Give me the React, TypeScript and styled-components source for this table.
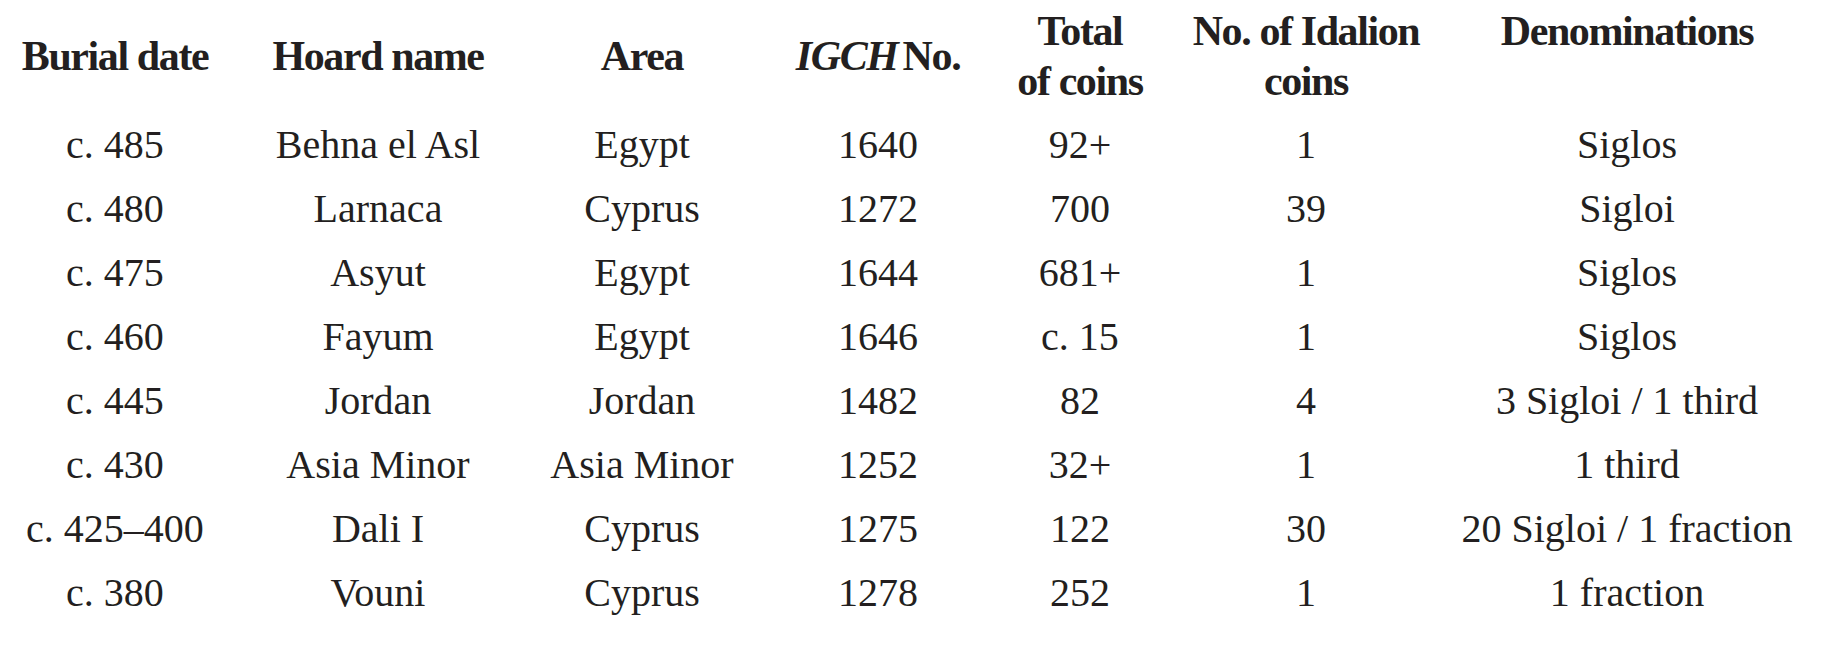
import React from "react";
import styled, { createGlobalStyle } from "styled-components";

const GlobalStyle = createGlobalStyle`
  html, body {
    margin: 0;
    padding: 0;
    background: #ffffff;
  }
  body {
    font-family: "Liberation Serif", "Times New Roman", serif;
    color: #231f20;
  }
`;

const Table = styled.div`
  display: grid;
  grid-template-columns: 230px 296px 232px 240px 164px 288px 354px;
`;

const HeadCell = styled.div<{ $valign?: "top" | "middle" }>`
  display: flex;
  flex-direction: column;
  align-items: center;
  justify-content: ${(p) => (p.$valign === "top" ? "flex-start" : "center")};
  padding: 6px 0 7px;
  font-weight: 700;
  font-size: 42px;
  line-height: 50px;
  letter-spacing: -1.4px;
  text-align: center;
  white-space: nowrap;
`;

const Italic = styled.span`
  font-style: italic;
  margin-right: -4px;
`;

const Cell = styled.div`
  font-size: 40px;
  line-height: 64px;
  text-align: center;
  white-space: nowrap;
`;

type Row = [string, string, string, string, string, string, string];

const rows: Row[] = [
  ["c. 485", "Behna el Asl", "Egypt", "1640", "92+", "1", "Siglos"],
  ["c. 480", "Larnaca", "Cyprus", "1272", "700", "39", "Sigloi"],
  ["c. 475", "Asyut", "Egypt", "1644", "681+", "1", "Siglos"],
  ["c. 460", "Fayum", "Egypt", "1646", "c. 15", "1", "Siglos"],
  ["c. 445", "Jordan", "Jordan", "1482", "82", "4", "3 Sigloi / 1 third"],
  ["c. 430", "Asia Minor", "Asia Minor", "1252", "32+", "1", "1 third"],
  ["c. 425–400", "Dali I", "Cyprus", "1275", "122", "30", "20 Sigloi / 1 fraction"],
  ["c. 380", "Vouni", "Cyprus", "1278", "252", "1", "1 fraction"],
];

const App = () => {
  return (
    <>
      <GlobalStyle />
      <Table>
        <HeadCell>Burial date</HeadCell>
        <HeadCell>Hoard name</HeadCell>
        <HeadCell>Area</HeadCell>
        <HeadCell>
          <span>
            <Italic>IGCH</Italic> No.
          </span>
        </HeadCell>
        <HeadCell>
          <span>Total</span>
          <span>of coins</span>
        </HeadCell>
        <HeadCell>
          <span>No. of Idalion</span>
          <span>coins</span>
        </HeadCell>
        <HeadCell $valign="top">Denominations</HeadCell>

        {rows.map((row, i) =>
          row.map((value, j) => <Cell key={`${i}-${j}`}>{value}</Cell>)
        )}
      </Table>
    </>
  );
};

export default App;
